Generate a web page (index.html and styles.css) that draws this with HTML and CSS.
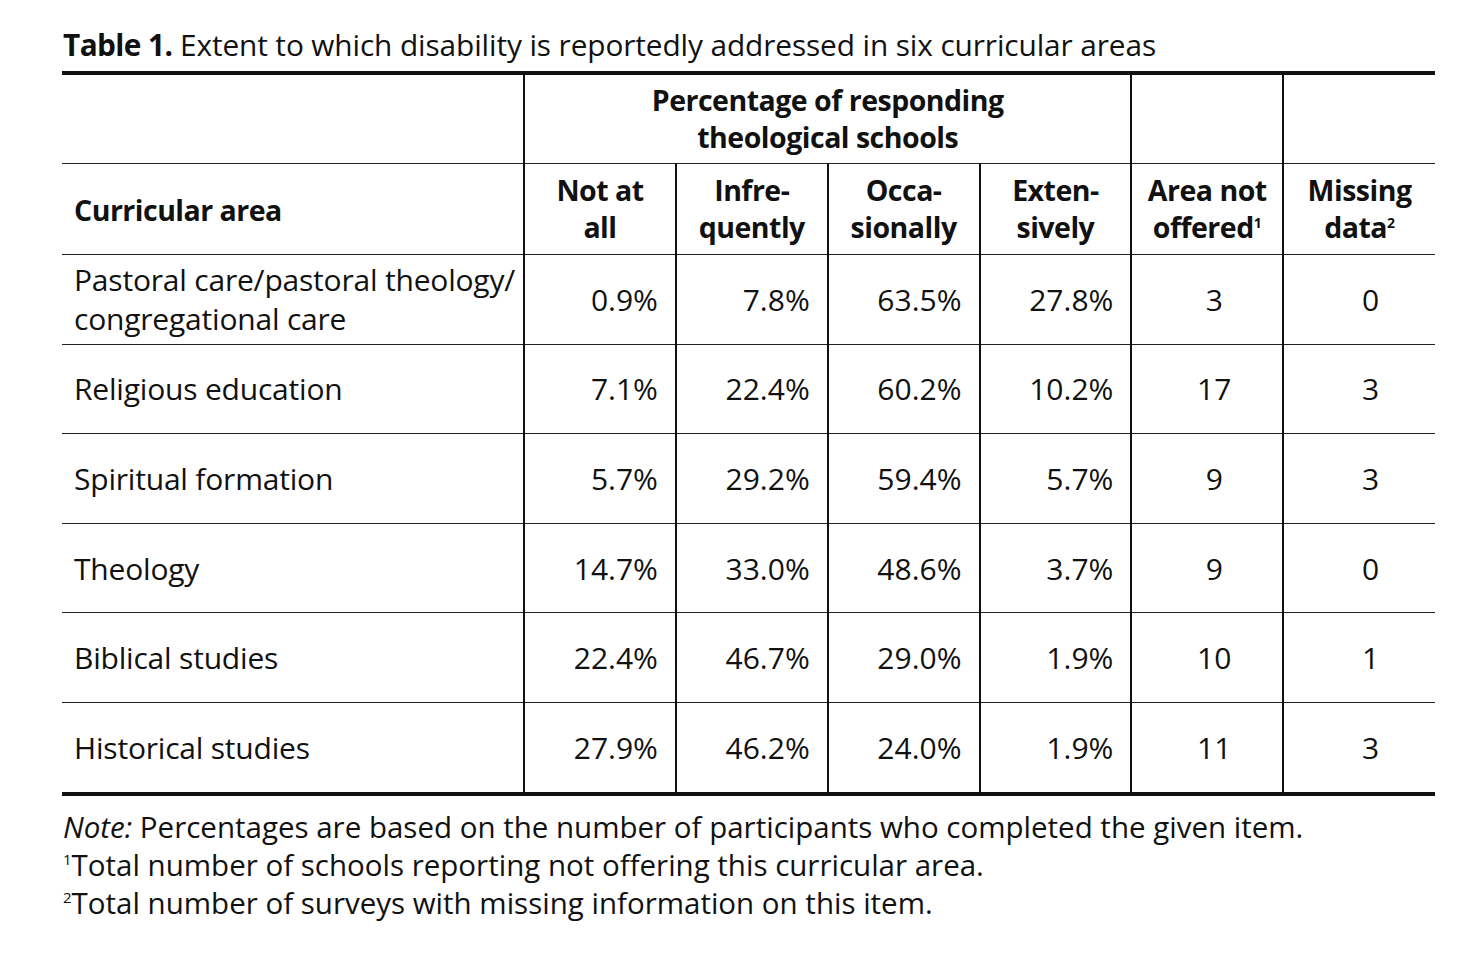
FILE: index.html
```html
<!DOCTYPE html>
<html>
<head>
<meta charset="utf-8">
<link rel="stylesheet" href="styles.css">
</head>
<body>
<div class="page">
  <p class="caption"><b>Table 1.</b> Extent to which disability is reportedly addressed in six curricular areas</p>
  <table class="tbl">
    <colgroup>
      <col class="c-area">
      <col class="c-num"><col class="c-num"><col class="c-num"><col class="c-num">
      <col class="c-num"><col class="c-num">
    </colgroup>
    <thead>
      <tr class="h1">
        <th class="blank"></th>
        <th colspan="4" class="span">Percentage of responding<br>theological schools</th>
        <th></th>
        <th></th>
      </tr>
      <tr class="h2">
        <th class="area">Curricular area</th>
        <th>Not at<br>all</th>
        <th>Infre-<br>quently</th>
        <th>Occa-<br>sionally</th>
        <th>Exten-<br>sively</th>
        <th>Area not<br>offered<sup>1</sup></th>
        <th>Missing<br>data<sup>2</sup></th>
      </tr>
    </thead>
    <tbody>
      <tr><td class="area">Pastoral care/pastoral theology/<br>congregational care</td><td>0.9%</td><td>7.8%</td><td>63.5%</td><td>27.8%</td><td class="ct">3</td><td class="ct2">0</td></tr>
      <tr><td class="area">Religious education</td><td>7.1%</td><td>22.4%</td><td>60.2%</td><td>10.2%</td><td class="ct">17</td><td class="ct2">3</td></tr>
      <tr><td class="area">Spiritual formation</td><td>5.7%</td><td>29.2%</td><td>59.4%</td><td>5.7%</td><td class="ct">9</td><td class="ct2">3</td></tr>
      <tr><td class="area">Theology</td><td>14.7%</td><td>33.0%</td><td>48.6%</td><td>3.7%</td><td class="ct">9</td><td class="ct2">0</td></tr>
      <tr><td class="area">Biblical studies</td><td>22.4%</td><td>46.7%</td><td>29.0%</td><td>1.9%</td><td class="ct">10</td><td class="ct2">1</td></tr>
      <tr><td class="area">Historical studies</td><td>27.9%</td><td>46.2%</td><td>24.0%</td><td>1.9%</td><td class="ct">11</td><td class="ct2">3</td></tr>
    </tbody>
  </table>
  <div class="notes">
    <p><i>Note:</i> Percentages are based on the number of participants who completed the given item.</p>
    <p><sup>1</sup>Total number of schools reporting not offering this curricular area.</p>
    <p><sup>2</sup>Total number of surveys with missing information on this item.</p>
  </div>
</div>
</body>
</html>
```

FILE: styles.css
```css
html, body {
  margin: 0;
  padding: 0;
  background: #fff;
}
body {
  font-family: "Open Sans", "Lato", "Liberation Sans", sans-serif;
  color: #111;
  width: 1481px;
  height: 961px;
  overflow: hidden;
}
.page {
  padding: 24px 0 0 62px;
  width: 1373px;
}
.caption {
  margin: 0 0 0 1px;
  font-size: 29.8px;
  line-height: 42px;
  height: 47px;
  white-space: nowrap;
  letter-spacing: -0.1px;
}
.caption b {
  font-weight: 700;
  letter-spacing: -0.6px;
}
.tbl {
  width: 1373px;
  border-collapse: collapse;
  table-layout: fixed;
  border-top: 4px solid #111;
  border-bottom: 4px solid #111;
}
.c-area { width: 462px; }
.c-num { width: 151.8px; }
th, td {
  padding: 0;
  border-left: 2px solid #111;
  border-bottom: 1.5px solid #222;
  vertical-align: middle;
}
th:first-child, td:first-child {
  border-left: none;
}
th {
  font-weight: 700;
  font-size: 28.5px;
  line-height: 37px;
  text-align: center;
  height: 88px;
  letter-spacing: -0.5px;
}
th.area {
  text-align: left;
  padding-left: 12px;
  padding-top: 2px;
}
th sup {
  font-size: 14px;
  line-height: 0;
  vertical-align: 10px;
  letter-spacing: 0;
}
td {
  font-size: 30px;
  line-height: 39px;
  height: 88.6px;
  text-align: right;
  padding-right: 17px;
}
td.area {
  text-align: left;
  padding-left: 12px;
  padding-right: 0;
  letter-spacing: -0.2px;
}
td.ct {
  text-align: center;
  padding-right: 0;
  padding-left: 14px;
}
td.ct2 {
  text-align: center;
  padding-right: 0;
  padding-left: 22px;
}
tbody tr:last-child td {
  border-bottom: none;
}
.notes {
  padding-top: 12px;
  padding-left: 1px;
}
.notes p {
  margin: 0;
  font-size: 29.5px;
  line-height: 38px;
  white-space: nowrap;
}
.notes sup {
  font-size: 15px;
  line-height: 0;
  vertical-align: 11px;
}
```
